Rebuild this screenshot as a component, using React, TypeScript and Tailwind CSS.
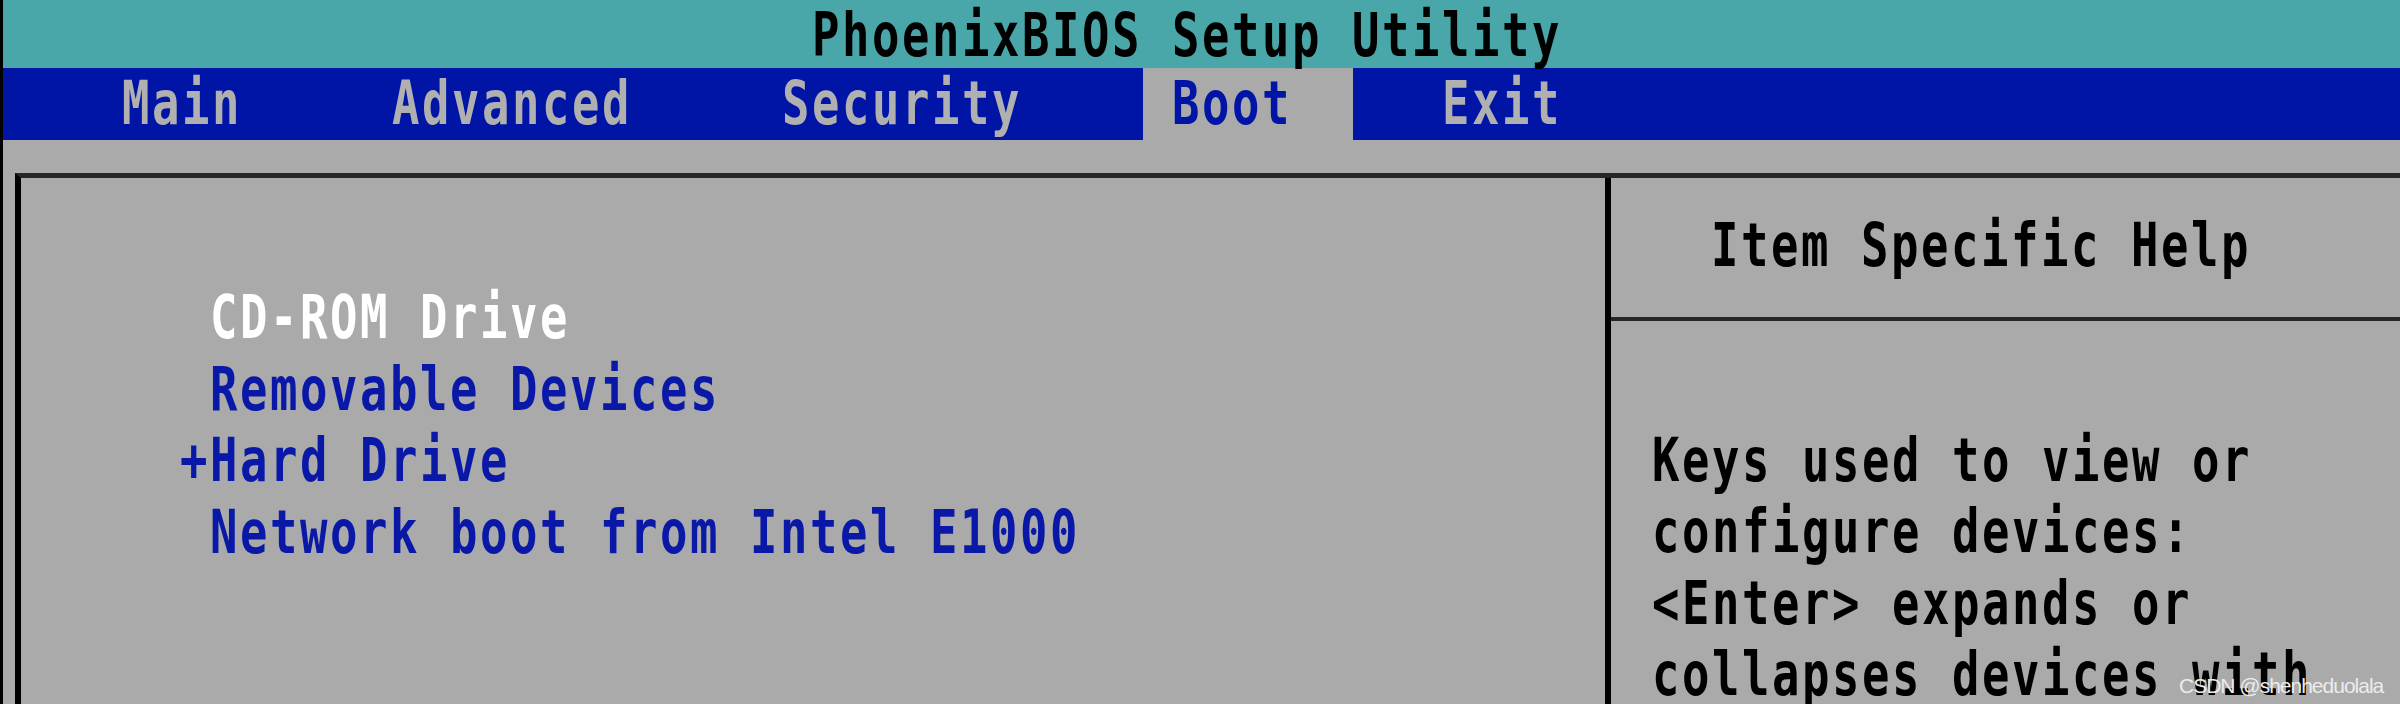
import React from "react";

const T =
  "block whitespace-pre font-['DejaVu_Sans_Mono',monospace] font-bold text-[60px] leading-[71.5px] tracking-[3.35px] scale-x-[0.76] origin-left translate-x-[1px]";

const tabs = [
  { label: "Main", w: "w-[210px]", active: false },
  { label: "Advanced", w: "w-[330px]", active: false },
  { label: "Security", w: "w-[330px]", active: false },
  { label: "Boot", w: "w-[210px]", active: true },
  { label: "Exit", w: "w-[210px]", active: false },
];

export default function App() {
  return (
    <div className="relative flex w-[2400px] h-[704px] overflow-hidden bg-[#aaaaaa]">
      <div className="w-[3px] shrink-0 bg-black" />
      <div className="flex flex-1 flex-col">
        {/* Title bar */}
        <div className="h-[68px] shrink-0 bg-[#4aa7a9] pl-[808px]">
          <div className={`${T} leading-[64.5px] text-black`}>PhoenixBIOS Setup Utility</div>
        </div>
        {/* Menu bar */}
        <div className="flex h-[71.5px] shrink-0 gap-[60px] bg-[#0014a5] pl-[90px]">
          {tabs.map((t) => (
            <div
              key={t.label}
              className={`${t.w} h-full pl-[28px] ${t.active ? "bg-[#aaaaaa]" : ""}`}
            >
              <div
                className={`${T} leading-[70px] ${t.active ? "text-[#0014a5]" : "text-[#b0b0b0]"}`}
              >
                {t.label}
              </div>
            </div>
          ))}
        </div>
        {/* Body */}
        <div className="flex flex-1 flex-col">
          <div className="mt-[33.5px] ml-[12px] mr-[7px] flex flex-1 border-t-[5px] border-x-[6px] border-t-[#262626] border-x-black">
            <div className="w-[1584px] shrink-0 pt-[104px] pl-[188px]">
              <div className={`${T} text-white`}>CD-ROM Drive</div>
              <div className={`${T} text-[#0a18a8]`}>Removable Devices</div>
              <div className={`${T} -ml-[30px] text-[#0a18a8]`}>+Hard Drive</div>
              <div className={`${T} text-[#0a18a8]`}>Network boot from Intel E1000</div>
            </div>
            <div className="flex flex-1 flex-col border-l-[6px] border-black">
              <div className="h-[142.5px] shrink-0 border-b-[4px] border-[#262626] pt-[32px] pl-[99px]">
                <div className={`${T} text-black`}>Item Specific Help</div>
              </div>
              <div className="pt-[104px] pl-[40px] text-black">
                <div className={T}>Keys used to view or</div>
                <div className={T}>configure devices:</div>
                <div className={T}>{"<Enter> expands or"}</div>
                <div className={T}>collapses devices with</div>
              </div>
            </div>
          </div>
        </div>
      </div>
      <div className="absolute left-[2179px] top-[675px] font-['Liberation_Sans',Arial,sans-serif] text-[21px] leading-[21px] tracking-[-1px] text-[#ececec] whitespace-nowrap">
        CSDN @shenheduolala
      </div>
    </div>
  );
}
